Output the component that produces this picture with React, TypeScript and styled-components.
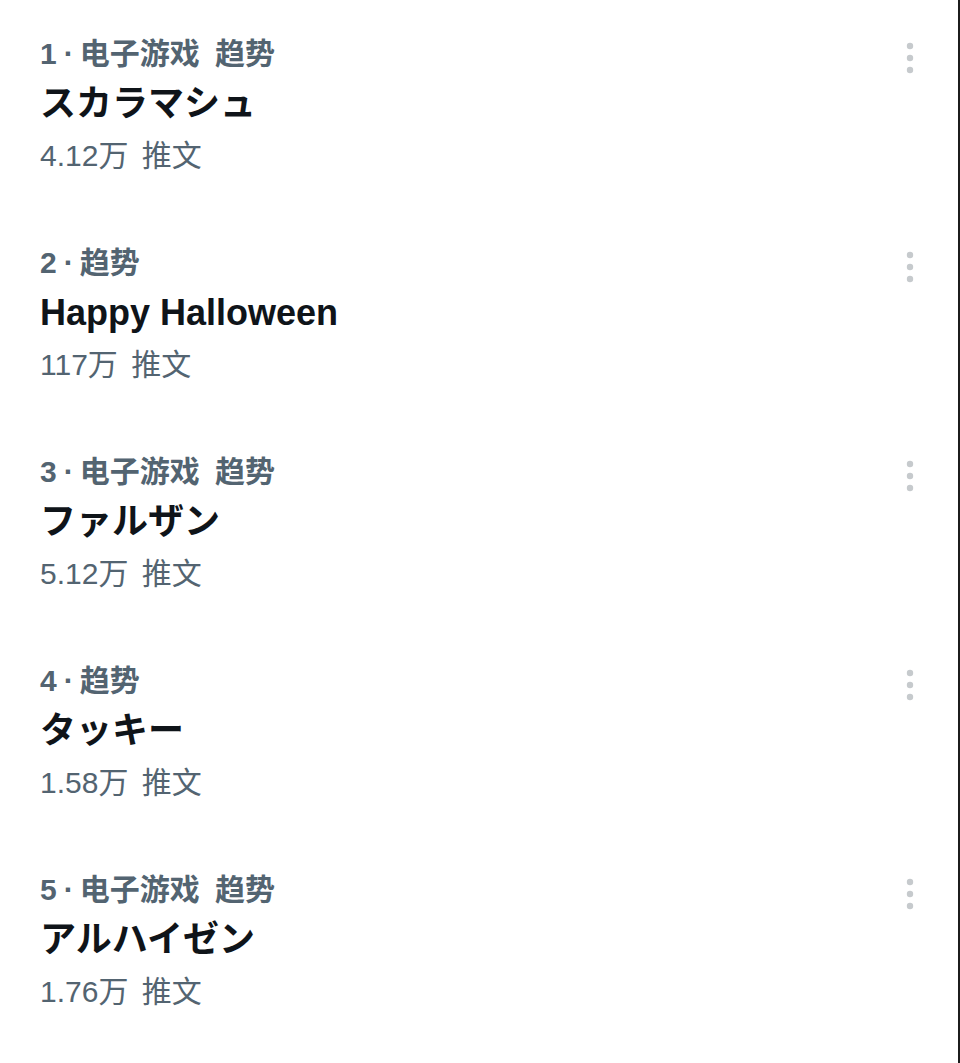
import React from "react";
import styled, { createGlobalStyle } from "styled-components";

type TTrend = {
  rank: number;
  category?: string;
  title: string;
  count: string;
};

const trends: TTrend[] = [
  { rank: 1, category: "电子游戏", title: "スカラマシュ", count: "4.12万" },
  { rank: 2, title: "Happy Halloween", count: "117万" },
  { rank: 3, category: "电子游戏", title: "ファルザン", count: "5.12万" },
  { rank: 4, title: "タッキー", count: "1.58万" },
  { rank: 5, category: "电子游戏", title: "アルハイゼン", count: "1.76万" },
];

const GlobalStyle = createGlobalStyle`
  html, body {
    margin: 0;
    padding: 0;
    background: #ffffff;
  }
  body {
    font-family: "Liberation Sans", "Noto Sans CJK SC", "Noto Sans CJK JP", sans-serif;
    -webkit-font-smoothing: antialiased;
  }
`;

const Page = styled.div`
  box-sizing: border-box;
  width: 960px;
  min-height: 1063px;
  border-right: 2px solid #1c1c1c;
  background: #ffffff;
`;

const List = styled.ul`
  list-style: none;
  margin: 0;
  padding: 0;
`;

const Item = styled.li`
  display: flex;
  justify-content: space-between;
  align-items: flex-start;
  padding: 32px 36px 29px 40px;
`;

const Content = styled.div`
  display: flex;
  flex-direction: column;
`;

const Category = styled.span`
  font-size: 30px;
  line-height: 44px;
  font-weight: 700;
  color: #536471;
  white-space: nowrap;
  word-spacing: 7px;
`;

const Dot = styled.span`
  margin: 0 6px 0 7px;
`;

const Title = styled.span`
  font-size: 36px;
  line-height: 56px;
  font-weight: 700;
  color: #0f1419;
  white-space: nowrap;
`;

const Count = styled.span`
  font-size: 30px;
  line-height: 48px;
  color: #536471;
  white-space: nowrap;
  word-spacing: 5px;
`;

const MoreButton = styled.button`
  display: flex;
  align-items: center;
  justify-content: center;
  width: 24px;
  height: 36px;
  margin-top: 8px;
  padding: 0;
  border: none;
  background: transparent;
  color: #c6cacd;
  cursor: pointer;
`;

function MoreIcon() {
  return (
    <svg width="24" height="36" viewBox="0 0 24 36" fill="currentColor">
      <circle cx="12" cy="6" r="3.2" />
      <circle cx="12" cy="18" r="3.2" />
      <circle cx="12" cy="30" r="3.2" />
    </svg>
  );
}

function TrendRow({ rank, category, title, count }: TTrend) {
  return (
    <Item>
      <Content>
        <Category>
          {rank}
          <Dot>·</Dot>
          {category ? `${category} 趋势` : "趋势"}
        </Category>
        <Title>{title}</Title>
        <Count>{count} 推文</Count>
      </Content>
      <MoreButton aria-label="更多">
        <MoreIcon />
      </MoreButton>
    </Item>
  );
}

export default function App() {
  return (
    <>
      <GlobalStyle />
      <Page>
        <List>
          {trends.map((t) => (
            <TrendRow key={t.rank} {...t} />
          ))}
        </List>
      </Page>
    </>
  );
}
